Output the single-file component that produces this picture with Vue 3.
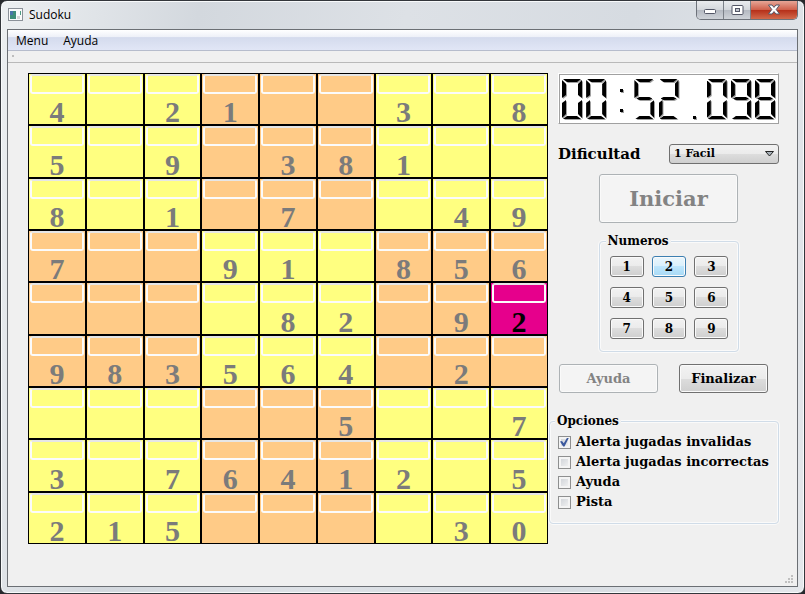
<script setup>
import { ref } from 'vue'

const rows = [
  '4.21..3.8',
  '5.9.381..',
  '8.1.7..49',
  '7..91.856',
  '....82.92',
  '983564.2.',
  '.....5..7',
  '3.76412.5',
  '215....30'
]
const cells = rows.flatMap((row, r) =>
  [...row].map((ch, c) => ({
    key: r + '-' + c,
    value: ch === '.' ? '' : ch,
    odd: (Math.floor(r / 3) + Math.floor(c / 3)) % 2 === 1,
    active: r === 4 && c === 8
  }))
)

const clock = '00:52.098'
const segmentsOf = {
  0: 'abcdef', 1: 'bc', 2: 'abged', 3: 'abgcd', 4: 'fgbc',
  5: 'afgcd', 6: 'afgedc', 7: 'abc', 8: 'abcdefg', 9: 'abcdfg',
  ':': 'ij', '.': 'k'
}

const level = ref('1 Facil')
const picked = ref(2)
const options = ref([
  { id: 'invalidas', label: 'Alerta jugadas invalidas', on: true },
  { id: 'incorrectas', label: 'Alerta jugadas incorrectas', on: false },
  { id: 'ayuda', label: 'Ayuda', on: false },
  { id: 'pista', label: 'Pista', on: false }
])
</script>

<template>
  <div class="window">
    <header class="titlebar">
      <svg class="app-icon" width="15" height="14" viewBox="0 0 15 14" aria-hidden="true">
        <rect x="0.5" y="0.5" width="14" height="12" fill="#fafafa" stroke="#8b9199" />
        <rect x="2" y="3" width="6" height="8" fill="#3f8c78" />
        <rect x="2" y="3" width="3" height="4" fill="#4a74a8" />
        <rect x="9" y="8" width="3" height="3" fill="#d4d4d4" />
        <rect x="12" y="3" width="1" height="4" fill="#4f9c83" />
      </svg>
      <h1 class="title">Sudoku</h1>
      <div class="controls">
        <button class="ctl" aria-label="Minimizar">
          <svg width="14" height="10" viewBox="0 0 14 10"><rect x="1.5" y="4.5" width="11" height="4" rx="1" fill="#fff" stroke="#535666" /></svg>
        </button>
        <button class="ctl" aria-label="Maximizar">
          <svg width="13" height="11" viewBox="0 0 13 11"><rect x="1" y="0.5" width="11" height="9" rx="1" fill="#fff" stroke="#535666" /><rect x="4.5" y="3.5" width="4" height="3" fill="#c4c8d0" stroke="#535666" /></svg>
        </button>
        <button class="ctl close" aria-label="Cerrar">
          <svg width="14" height="12" viewBox="0 0 14 12"><path d="M1.500 1H5L7 3.400L9 1H12.500L9.200 5.500L12.500 10H9L7 7.600L5 10H1.500L4.800 5.500Z" fill="#fff" stroke="#535666" /></svg>
        </button>
      </div>
    </header>

    <div class="client">
      <nav class="menubar">
        <a href="#menu">Menu</a>
        <a href="#ayuda">Ayuda</a>
      </nav>
      <div class="toolbar"><span class="grip"></span></div>

      <main class="content">
        <section class="board" aria-label="Tablero">
          <div v-for="cell in cells" :key="cell.key" class="cell" :class="{ odd: cell.odd, active: cell.active }">
            <span class="notes"></span>
            <span class="value">{{ cell.value }}</span>
          </div>
        </section>

        <aside class="side">
          <div class="lcd" role="timer" :aria-label="clock">
            <span v-for="(ch, i) in clock" :key="i" class="digit">
              <i v-for="s in segmentsOf[ch]" :key="s" class="seg" :class="s"></i>
            </span>
          </div>

          <div class="level">
            <label for="level">Dificultad</label>
            <div class="combo">
              <select id="level" v-model="level">
                <option>1 Facil</option>
              </select>
              <svg class="arrow" width="9" height="6" viewBox="0 0 9 6" aria-hidden="true"><path d="M0.500 0.500H8.500L4.500 5Z" fill="#a9b2ba" stroke="#222" /></svg>
            </div>
          </div>

          <button class="btn start" disabled>Iniciar</button>

          <fieldset class="numbers">
            <legend>Numeros</legend>
            <button v-for="n in 9" :key="n" class="btn" :class="{ picked: n === picked }" @click="picked = n">{{ n }}</button>
          </fieldset>

          <div class="actions">
            <button class="btn help" disabled>Ayuda</button>
            <button class="btn finish">Finalizar</button>
          </div>

          <fieldset class="options">
            <legend>Opciones</legend>
            <label v-for="o in options" :key="o.id" :for="o.id">
              <input :id="o.id" v-model="o.on" type="checkbox" />
              <span>{{ o.label }}</span>
            </label>
          </fieldset>
        </aside>
      </main>
      <svg class="resize" width="9" height="9" viewBox="0 0 9 9" aria-hidden="true">
        <path d="M6 0h2v2h-2zM3 3h2v2h-2zM6 3h2v2h-2zM0 6h2v2h-2zM3 6h2v2h-2zM6 6h2v2h-2z" fill="#c0c0c0" />
      </svg>
    </div>
  </div>
</template>

<style>
body {
  margin: 0;
  background: #26282c;
}
</style>

<style scoped>
* {
  box-sizing: border-box;
}
.window {
  display: flex;
  flex-direction: column;
  min-height: 100vh;
  padding: 0 6px 6px;
  border: 1px solid #33363b;
  border-radius: 7px;
  background: linear-gradient(100deg, #eceff1 0, #d3d8de 22%, #dde1e6 45%, #d6dbe1 70%, #e4e7eb 100%);
  box-shadow: inset 0 0 0 1px #f8fafb;
  font: 12px/16px "Open Sans", "Noto Sans", sans-serif;
  color: #000;
}
.titlebar {
  display: flex;
  align-items: center;
  height: 28px;
}
.app-icon {
  margin-left: 1px;
}
.title {
  flex: 1;
  margin: 0 0 0 6px;
  font-size: 12px;
  font-weight: 400;
  text-shadow: 0 0 6px #fff;
}
.controls {
  display: flex;
  align-self: flex-start;
  border: 1px solid #6d727a;
  border-top: 0;
  border-radius: 0 0 5px 5px;
  overflow: hidden;
}
.ctl {
  display: flex;
  align-items: center;
  justify-content: center;
  width: 27px;
  height: 18px;
  padding: 0;
  border: 0;
  border-right: 1px solid #7b8088;
  background: linear-gradient(#e9ebee 0, #d4d7dc 48%, #b4b9c1 50%, #ced2d8 100%);
}
.ctl.close {
  width: 46px;
  border-right: 0;
  background: linear-gradient(#e6a697 0, #d0614c 48%, #b52e18 50%, #d26a4c 100%);
}
.client {
  position: relative;
  display: flex;
  flex: 1;
  flex-direction: column;
  border: 1px solid #6b6f74;
  background: #f0f0f0;
}
.menubar {
  display: flex;
  gap: 15px;
  height: 21px;
  padding: 3px 8px 1px;
  border-bottom: 1px solid #b6bccc;
  background: linear-gradient(#fff 0, #eef1f8 33%, #d4dbed 38%, #e1e6f6 100%);
}
.menubar a {
  color: #000;
  text-decoration: none;
}
.toolbar {
  height: 12px;
  padding: 4px;
  border-bottom: 1px solid #b9b9b9;
}
.grip {
  display: block;
  width: 2px;
  height: 2px;
  background: #bdbdbd;
}
.content {
  display: flex;
  flex: 1;
  gap: 1px;
  padding: 10px 18px 42px 20px;
}
.board {
  display: grid;
  flex: 1;
  grid-template-columns: repeat(9, 1fr);
  grid-auto-rows: 1fr;
  gap: 2px;
  border: 1px solid #000;
  background: #000;
}
.cell {
  display: flex;
  flex-direction: column;
  justify-content: space-between;
  background: #ffff80;
}
.odd {
  background: #ffcb87;
}
.cell.active {
  background: #e6008c;
}
.notes {
  height: 20px;
  margin: 0 1px;
  border: 2px solid #fbfbfb;
  border-top-color: #e6e6e6;
  border-radius: 3px;
}
.value {
  min-height: 24px;
  font: 700 30px/24px "Liberation Serif", serif;
  text-align: center;
  color: #7b7b7b;
}
.active .value {
  color: #000;
}
.side {
  display: flex;
  flex-direction: column;
  align-items: center;
  width: 230px;
  padding-left: 9px;
  font: 700 13px/14px "DejaVu Serif", serif;
}
.lcd {
  display: flex;
  align-self: stretch;
  justify-content: space-between;
  height: 51px;
  padding: 5px 3px;
  border: 1px solid #a0a0a0;
  border-top-color: #fff;
  border-left-color: #fff;
  background: #fff;
  box-shadow: inset 1px 1px 0 #a0a0a0;
}
.digit {
  position: relative;
  width: 20px;
  height: 40px;
  filter: drop-shadow(1px 1px 0 #a0a0a0);
}
.seg {
  position: absolute;
  background: #000;
}
.a, .d {
  left: 1px;
  width: 18px;
  height: 3px;
}
.a {
  top: 0;
  clip-path: polygon(0 0, 100% 0, 14px 100%, 4px 100%);
}
.d {
  bottom: 0;
  clip-path: polygon(4px 0, 14px 0, 100% 100%, 0 100%);
}
.g {
  top: 18px;
  left: 2px;
  width: 16px;
  height: 3px;
  clip-path: polygon(0 50%, 3px 0, 13px 0, 100% 50%, 13px 100%, 3px 100%);
}
.b, .c, .e, .f {
  width: 4px;
  height: 18px;
}
.b, .f {
  top: 1px;
}
.c, .e {
  bottom: 1px;
}
.b, .c {
  right: 0;
}
.e, .f {
  left: 0;
}
.b {
  clip-path: polygon(100% 0, 100% 100%, 0 15px, 0 4px);
}
.c {
  clip-path: polygon(100% 0, 100% 100%, 0 14px, 0 3px);
}
.f {
  clip-path: polygon(0 0, 100% 4px, 100% 15px, 0 100%);
}
.e {
  clip-path: polygon(0 3px, 100% 0, 100% 14px, 0 100%);
}
.i, .j, .k {
  left: 10px;
  width: 3px;
  height: 3px;
}
.i {
  top: 10px;
}
.j {
  top: 30px;
}
.k {
  bottom: 0;
}
.level {
  display: flex;
  align-self: stretch;
  align-items: center;
  justify-content: space-between;
  margin-top: 20px;
  font-size: 15px;
}
.combo {
  position: relative;
}
.combo select {
  display: block;
  width: 110px;
  height: 20px;
  padding: 0 4px;
  border: 1px solid #707070;
  border-radius: 3px;
  appearance: none;
  background: linear-gradient(#f2f2f2 0, #ebebeb 50%, #dddddd 50%, #cfcfcf 100%);
  font: 700 11px/16px "DejaVu Serif", serif;
  color: #000;
}
.arrow {
  position: absolute;
  top: 7px;
  right: 5px;
}
.btn {
  padding: 0;
  border: 1px solid #707070;
  border-radius: 3px;
  background: linear-gradient(#f2f2f2 0, #ebebeb 50%, #dddddd 50%, #cfcfcf 100%);
  box-shadow: inset 0 0 0 1px #fafafa;
  font: 700 13px/14px "DejaVu Serif", serif;
  color: #000;
}
.btn:disabled {
  border-color: #adb2b5;
  background: #f4f4f4;
  color: #838383;
}
.btn.picked {
  border-color: #3c7fb1;
  background: linear-gradient(#eaf6fd 0, #d9f0fc 50%, #bee6fd 50%, #a7d9f5 100%);
}
.start {
  width: 139px;
  height: 49px;
  margin-top: 10px;
  font-size: 21px;
}
fieldset {
  margin: 0;
  border: 1px solid #d0dce8;
  border-radius: 4px;
  box-shadow: inset 0 0 0 1px #fafafa, 0 0 0 1px #fafafa;
}
legend {
  padding: 0 2px;
  background: #f0f0f0;
  font-size: 12px;
}
.numbers {
  display: grid;
  grid-template-columns: repeat(3, 1fr);
  gap: 10px 8px;
  width: 140px;
  margin-top: 11px;
  padding: 8px 9px 12px 10px;
}
.numbers legend {
  margin-left: -4px;
}
.numbers .btn {
  height: 21px;
  font-size: 12px;
}
.actions {
  display: flex;
  align-self: stretch;
  justify-content: space-between;
  margin-top: 12px;
  padding: 0 11px 0 1px;
}
.actions .btn {
  height: 29px;
}
.help {
  width: 99px;
}
.finish {
  width: 89px;
}
.options {
  display: flex;
  align-self: stretch;
  flex-direction: column;
  gap: 6px;
  margin: 21px 0 0 -9px;
  padding: 7px 8px 14px;
}
.options legend {
  margin-left: -3px;
}
.options label {
  display: flex;
  align-items: center;
  gap: 5px;
  white-space: nowrap;
}
.options input {
  flex: none;
  width: 13px;
  height: 13px;
  margin: 0;
  border: 1px solid #8e8f8f;
  appearance: none;
  background: linear-gradient(135deg, #cbcfd5, #f6f6f6);
  box-shadow: inset 0 0 0 2px #f4f4f4;
}
.options input:checked::after {
  display: block;
  width: 9px;
  height: 9px;
  margin: 1px;
  background: #3d5a9e;
  clip-path: polygon(0 45%, 22% 40%, 42% 65%, 80% 0, 100% 0, 50% 100%, 35% 100%);
  content: "";
}
.resize {
  position: absolute;
  right: 3px;
  bottom: 2px;
}
</style>
